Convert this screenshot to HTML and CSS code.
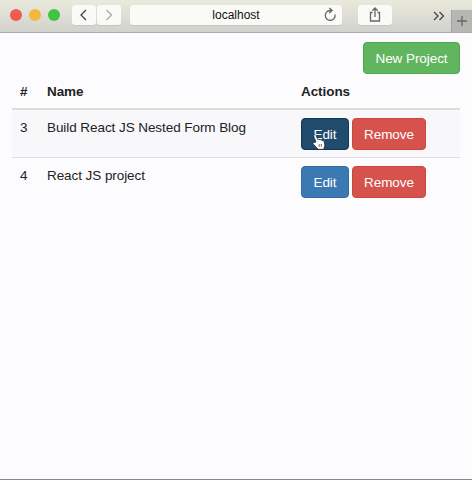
FILE: index.html
```html
<!DOCTYPE html>
<html lang="en">
<head>
<meta charset="utf-8">
<title>Projects</title>
<link rel="stylesheet" href="styles.css">
</head>
<body>
<div class="window">
  <header class="toolbar">
    <div class="lights"><i class="light red"></i><i class="light yellow"></i><i class="light green"></i></div>
    <div class="nav">
      <span class="control"><svg width="24" height="20" viewBox="0 0 24 20"><path d="m14 5-5 5 5 5" stroke="#444"/></svg></span>
      <span class="control"><svg width="24" height="20" viewBox="0 0 24 20"><path d="m9.500 5 5 5-5 5" stroke="#aaa"/></svg></span>
    </div>
    <div class="address control"><span>localhost</span>
      <svg class="reload" width="14" height="16" viewBox="0 0 14 16"><path d="M12 7.500A4.900 4.900 0 1 1 7 3.500h1.500M6.300 1l2.800 2.500L6.300 6" stroke="#666"/></svg>
    </div>
    <div class="share control"><svg width="14" height="18" viewBox="0 0 14 18"><path d="M4.500 6.500h-2v8.500h9V6.500h-2M7 11V2M4.300 4.700 7 2l2.700 2.700" stroke="#666"/></svg></div>
    <svg class="more" width="12" height="12" viewBox="0 0 12 12"><path d="m1 2 4 4-4 4M6.500 2l4 4-4 4" stroke="#444"/></svg>
    <div class="new-tab"><svg width="12" height="12" viewBox="0 0 12 12"><path d="M6 1v10M1 6h10" stroke="#666"/></svg></div>
  </header>
  <main class="page">
    <div class="actions-bar"><button class="btn success">New Project</button></div>
    <table class="projects">
      <colgroup><col class="col-id"><col class="col-name"><col></colgroup>
      <thead><tr><th>#</th><th>Name</th><th>Actions</th></tr></thead>
      <tbody>
        <tr class="striped"><td>3</td><td>Build React JS Nested Form Blog</td>
          <td><div class="buttons"><button class="btn primary active">Edit<svg class="cursor" width="14" height="17" viewBox="0 0 14 17"><path d="M4 9 1.800 3.200C1.300 1.500 3.300.8 4 2.400L5.900 6.700c.6-.8 1.700-.6 2 .2.800-.6 1.800-.2 2.100.7 1.100-.4 2.100.3 2.200 1.400l.6 3.500-1.100 3.800H6.200L1.200 11c-.8-1.200.5-2.200 1.500-1.500z" fill="#fff" stroke="#17242e" stroke-width=".7"/><path d="M7.200 11.200v2.600M9.300 11v2.600" stroke="#333" stroke-width=".8"/></svg></button><button class="btn danger">Remove</button></div></td></tr>
        <tr><td>4</td><td>React JS project</td>
          <td><div class="buttons"><button class="btn primary">Edit</button><button class="btn danger">Remove</button></div></td></tr>
      </tbody>
    </table>
  </main>
</div>
</body>
</html>
```
FILE: styles.css
```css
* { box-sizing: border-box; }
body { margin: 0; background: #fcfcff; color: #222; font: 13.5px/19px "Liberation Sans", Arial, sans-serif; letter-spacing: -0.07px; }
svg { display: block; fill: none; stroke-width: 1.3; }
.window { height: 480px; border-bottom: 1px solid #85858c; overflow: hidden; }
.toolbar { display: flex; height: 33px; padding: 5px 0 0 10px; background: linear-gradient(#e9e9dc, #d2d2cd); border-bottom: 1px solid #aaaab0; }
.lights { display: flex; gap: 7px; padding-top: 4px; }
.light { width: 12px; height: 12px; border-radius: 50%; }
.red { background: #ed5b51; }
.yellow { background: #f6b740; }
.green { background: #42c443; }
.control { display: flex; align-items: center; justify-content: center; height: 20px; background: #fafaf6; border-radius: 3px; box-shadow: 0 1px 0 #c4c4c4; }
.nav { display: flex; gap: 1px; margin-left: 12px; }
.nav .control { width: 24px; }
.address { position: relative; width: 212px; margin-left: 9px; padding-top: 1px; color: #111; font-size: 12px; letter-spacing: 0; }
.reload { position: absolute; right: 5px; top: 2px; }
.share { width: 34px; margin-left: 16px; }
.more { margin: 5px 0 0 41px; }
.new-tab { display: flex; align-items: center; justify-content: center; width: 21px; height: 22px; margin: 5px 0 0 auto; background: #b6b6b3; border-left: 1px solid #a4a4a4; }
.page { padding: 9px 12px; }
.actions-bar { display: flex; justify-content: flex-end; }
.btn { position: relative; height: 32px; padding: 0 11px; border: 1px solid; border-radius: 4px; color: #fff; font: inherit; letter-spacing: inherit; white-space: nowrap; }
.success { width: 97px; background: #62b55f; border-color: #4fa64f; }
.primary { width: 48px; background: #3b79b2; border-color: #316da4; }
.primary.active { background: #204b6c; border-color: #17364f; }
.danger { width: 74px; background: #d6534d; border-color: #ce453f; }
.projects { width: 448px; table-layout: fixed; border-collapse: separate; border-spacing: 0; }
.col-id { width: 27px; }
.col-name { width: 254px; }
th, td { padding: 8px; text-align: left; vertical-align: top; }
th { height: 36px; padding-bottom: 7px; border-bottom: 2px solid #dcdcd8; }
td { height: 48px; }
.striped td { padding-bottom: 7px; background: #f8f8fb; border-bottom: 1px solid #dedee3; }
.buttons { display: flex; gap: 3px; }
.cursor { position: absolute; left: 10px; top: 14px; }
```
